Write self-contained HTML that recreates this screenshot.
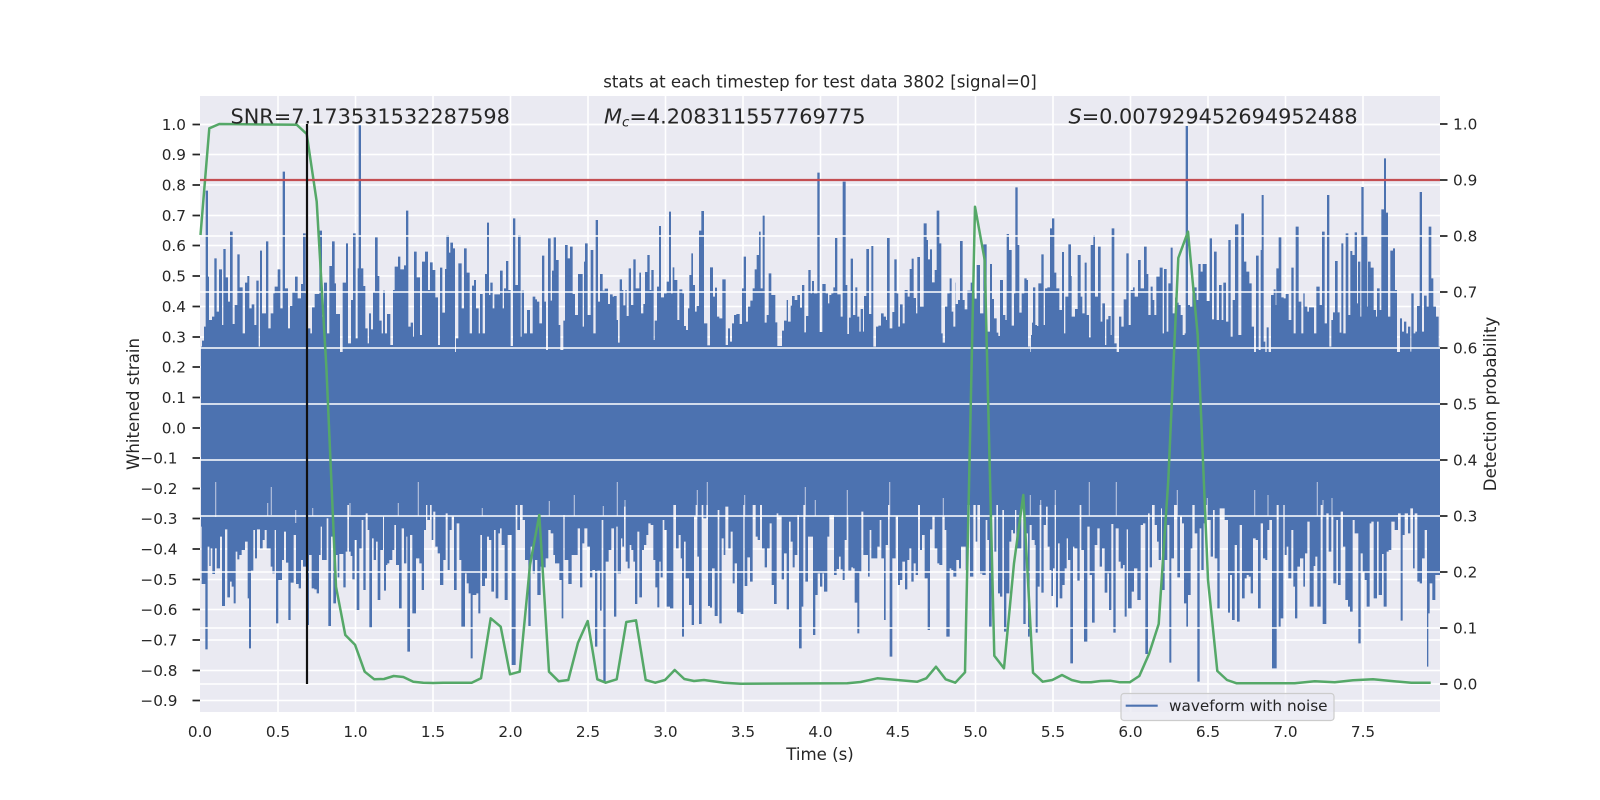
<!DOCTYPE html>
<html>
<head>
<meta charset="utf-8">
<title>stats at each timestep</title>
<style>
html,body{margin:0;padding:0;background:#fff;width:1600px;height:800px;overflow:hidden}
svg{display:block}
text{font-family:"DejaVu Sans","Liberation Sans",sans-serif;fill:#262626}
.t{font-size:15.28px}
.l{font-size:16.6px}
.a{font-size:20.83px}
.g{stroke:#fff;stroke-width:1.6;fill:none}
.k{stroke:#262626;stroke-width:1.8;fill:none}
.b{fill:#4c72b0}
</style>
</head>
<body>
<svg width="1600" height="800" viewBox="0 0 1600 800" xmlns="http://www.w3.org/2000/svg">
<rect width="1600" height="800" fill="#fff"/>
<rect x="200" y="96" width="1240" height="616" fill="#eaeaf2"/>
<path class="g" d="M278 96V712M355.5 96V712M433 96V712M510.500 96V712M588 96V712M665.500 96V712M743 96V712M820.500 96V712M898 96V712M975.500 96V712M1053 96V712M1130.500 96V712M1208 96V712M1285.500 96V712M1363 96V712"/>
<path class="g" d="M200 124.500H1440M200 154.500H1440M200 185H1440M200 215.500H1440M200 245.500H1440M200 276H1440M200 306.500H1440M200 337H1440M200 367H1440M200 397.500H1440M200 428H1440M200 458H1440M200 488.500H1440M200 518.500H1440M200 549H1440M200 579.500H1440M200 609.500H1440M200 640H1440M200 670.500H1440M200 700.500H1440"/>

<rect class="b" x="201" y="352" width="1239" height="153"/>

<g transform="translate(200 200) scale(.33333)">
<path class="b" d="M3 512V440H6V422H12V380H17V-28H24V230H27V360H36V350H43V175H50V335H57V208H66V375H70V147H77V232H84V305H90V95H98V372H104V315H112V163H119V262H128V400H135V248H142V228H148V325H155V313H163V375H169V242H176V440H180V152H186V340H198V124H205V385H212V340H220V280H224V260H233V208H241V325H248V-85H255V265H264V385H270V318H277V275H285V230H293V295H303V252H309V100H317V280H323V385H331V400H336V322H344V282H358V92H366V350H372V248H381V400H388V198H396V124H404V250H408V342H420V480H428V248H438V130H444V430H453V300H459V100H467V415H473V205H476V-225H483V205H490V258H496V385H503V430H507V340H513V388H519V275H525V112H533V228H538V362H545V400H549V272H555V400H561V342H571V435H579V270H584V200H594V170H601V208H612V196H618V32H625V380H632V368H639V410H642V155H650V232H660V405H666V185H675V155H684V270H690V187H698V210H706V292H714V435H720V203H727V338H735V207H739V105H747V158H751V128H759V145H765V460H768V415H775V190H785V325H792V145H800V218H809V400H816V257H822V240H828V325H836V400H840V282H848V400H855V222H861V68H867V285H871V248H878V325H883V283H900V212H908V325H912V265H918V183H925V270H932V438H939V55H946V255H954V105H962V410H965V272H972V400H981V330H990V400H998V290H1006V298H1011V305H1018V370H1026V167H1033V305H1038V450H1044V115H1052V302H1056V212H1061V112H1068V180H1076V375H1081V450H1090V362H1095V135H1103V175H1110V140H1118V282H1125V345H1134V222H1148V380H1152V185H1155V130H1163V345H1172V150H1180V400H1187V60H1194V305H1200V222H1208V272H1214V266H1224V312H1230V283H1238V290H1242V512Z"/>
</g>

<g transform="translate(614 160) scale(.33333)">
<path class="b" d="M0 632V408H8V480H12V548H17V358H24V390H28V436H34V390H38V468H44V325H51V435H58V298H65V385H76V338H81V460H88V432H93V336H100V285H107V390H112V330H119V540H122V482H129V380H135V198H141V412H150V400H158V365H165V155H171V400H176V322H181V360H190V480H196V388H205V400H210V498H216V510H222V445H226V345H232V280H237V375H243V455H248V438H255V212H262V153H270V490H280V556H288V322H297V410H303V383H309V470H316V475H325V358H335V555H342V505H348V545H354V490H360V465H367V462H377V492H384V385H389V290H396V485H402V440H409V422H416V385H422V328H428V285H435V215H440V385H446V167H452V488H458V465H464V340H472V405H484V487H490V558H504V512H510V482H518V420H522V485H530V437H534V408H542V420H550V405H558V443H564V375H571V517H576V468H583V330H590V400H594V363H600V400H610V38H617V516H625V372H635V400H642V430H646V405H652V400H658V382H663V234H670V403H680V470H686V65H695V375H700V522H705V473H710V296H717V465H724V382H730V470H736V515H740V447H747V515H750V408H757V267H765V462H772V258H778V560H786V500H793V497H801V460H809V470H816V480H819V234H827V505H835V456H841V298H848V400H853V500H858V433H866V490H872V390H881V410H887V327H893V296H899V414H906V460H910V291H918V440H929V190H938V240H942V298H948V268H954V367H962V330H968V152H976V250H982V520H986V548H993V440H1000V400H1007V355H1013V455H1018V500H1024V368H1025V432H1032V420H1038V243H1046V420H1052V448H1060V392H1070V368H1076V392H1082V416H1088V315H1098V460H1108V253H1118V515H1128V312H1134V417H1140V475H1148V518H1153V528H1158V360H1167V465H1174V480H1178V222H1185V270H1193V497H1200V400H1204V82H1211V255H1216V458H1223V400H1231V355H1238V360H1242V632Z"/>
</g>

<g transform="translate(1028 200) scale(.33333)">
<path class="b" d="M0 512V440H7V470H9V405H12V368H15V262H22V375H27V378H31V250H40V163H47V375H51V265H58V262H66V85H72V55H79V218H85V265H94V330H102V156H108V400H112V290H121V133H129V228H131V350H141V327H149V165H158V290H163V340H170V188H176V345H183V412H188V135H196V105H201V290H210V140H218V365H223V310H231V435H235V358H241V348H248V405H251V85H259V430H266V475H273V350H280V380H287V298H295V160H302V375H308V270H315V262H320V290H330V180H338V265H348V140H356V222H361V345H368V260H374V300H379V345H385V230H395V203H404V400H408V207H416V395H421V250H428V143H434V340H441V293H446V308H452V315H458V345H464V405H470V400H473V-222H480V315H486V320H493V260H497V262H506V300H511V192H518V215H524V192H536V303H545V115H552V358H558V155H566V360H573V255H581V360H586V248H594V365H601V120H608V410H614V300H621V73H631V405H640V40H648V185H655V215H664V250H671V380H678V505H684V167H692V450H698V150H701V-15H707V425H712V505H716V382H722V475H729V285H737V268H743V315H745V205H752V112H760V292H767V295H773V282H782V360H790V203H797V400H803V80H812V305H820V400H826V280H830V320H838V335H843V322H858V400H865V260H875V315H882V95H890V370H897V-15H904V440H910V360H915V337H921V183H929V337H935V398H940V130H946V400H953V100H961V345H967V153H973V165H980V97H987V310H990V185H997V350H1000V-39H1007V107H1018V320H1020V185H1028V203H1037V330H1044V350H1047V265H1055V330H1060V28H1068V-125H1074V38H1080V350H1087V152H1095V145H1101V270H1107V485H1112V495H1116V355H1122V395H1128V365H1135V400H1140V380H1147V455H1150V280H1157V400H1162V395H1167V318H1175V-24H1182V395H1188V287H1196V320H1202V80H1210V235H1216V320H1224V350H1232V440H1236V512Z"/>
</g>

<g transform="translate(200 480) scale(.33333)">
<path class="b" d="M3 -6V140H5V312H16V508H23V200H28V258H32V205H37V282H45V205H50V265H60V170H66V378H75V148H82V352H90V305H95V320H101V370H107V215H112V238H118V225H125V210H135V185H143V355H147V505H153V272H160V150H165V235H171V148H180V205H188V180H194V150H200V205H212V260H217V280H224V150H228V430H235V300H246V240H252V155H258V248H265V420H272V308H281V165H288V312H296V325H303V240H309V260H322V435H327V225H335V325H343V328H350V340H357V225H362V140H366V240H380V115H385V438H393V170H400V370H408V225H413V292H418V222H430V322H437V215H442V70H447V215H452V228H457V298H464V180H470V390H478V205H485V120H490V330H497V100H503V150H508V445H516V175H521V240H528V185H533V360H541V210H549V110H552V332H558V255H562V250H568V240H577V210H583V135H588V255H597V385H605V145H612V250H619V170H622V515H630V165H637V400H648V235H658V250H665V330H672V150H678V45H682V120H690V50H695V180H700V95H706V200H713V220H720V315H730V240H737V100H743V270H749V150H755V110H762V330H770V130H778V240H784V440H795V280H800V310H806V340H812V535H818V345H829V340H835V400H841V165H846V318H855V295H861V170H867V180H874V335H882V150H887V355H895V160H900V145H905V195H914V360H923V165H935V555H947V50H952V150H960V30H968V120H975V240H985V438H992V200H998V280H1005V240H1012V345H1022V260H1030V262H1037V235H1045V150H1052V160H1060V225H1065V250H1078V300H1085V415H1090V105H1094V240H1105V312H1115V225H1133V145H1140V322H1147V190H1153V145H1162V200H1170V292H1177V270H1185V500H1192V272H1200V392H1205V120H1210V605H1217V245H1226V210H1234V145H1242V-6Z"/>
</g>

<g transform="translate(614 480) scale(.33333)">
<path class="b" d="M0 -6V410H7V140H11V280H21V175H25V200H30V80H35V245H41V265H47V195H52V210H58V245H63V372H70V155H76V352H84V210H90V195H97V165H103V130H110V135H118V240H124V322H130V382H136V245H140V292H146V120H151V150H158V380H168V385H178V70H186V205H194V165H200V235H204V470H210V185H215V295H225V375H233V435H240V110H245V20H250V230H255V432H263V70H268V115H277V0H282V378H288V383H294V265H302V408H311V90H316V430H323V175H329V225H334V80H343V205H350V155H356V310H362V250H369V397H380V402H388V40H392V318H400V232H408V305H416V50H425V170H431V180H438V55H444V205H452V262H459V205H467V130H473V315H480V372H488V100H493V110H503V298H510V220H518V388H525V125H530V185H536V262H542V225H550V105H555V505H563V380H568V20H574V305H582V170H597V465H604V345H611V280H618V320H625V280H630V335H640V170H646V105H660V285H668V267H675V230H680V268H686V300H692V180H698V105H703V272H712V262H717V265H722V368H730V460H736V275H742V95H748V225H762V290H767V150H772V235H790V200H797V120H802V235H810V420H815V195H822V15H827V530H835V235H845V110H852V315H858V300H865V245H873V328H880V240H886V205H892V305H899V250H905V285H912V55H918V210H924V165H932V295H941V450H948V148H955V110H962V205H970V250H976V255H985V110H992V150H997V470H1007V265H1012V270H1018V290H1027V240H1035V265H1041V200H1055V270H1060V60H1068V290H1078V65H1085V185H1090V50H1098V280H1105V285H1115V120H1120V180H1125V440H1133V110H1141V215H1147V50H1152V340H1158V350H1165V90H1170V455H1177V340H1186V185H1192V150H1197V160H1203V90H1207V205H1222V50H1228V432H1235V160H1242V-6Z"/>
</g>

<g transform="translate(1028 480) scale(.33333)">
<path class="b" d="M0 -6V470H5V135H11V180H20V195H23V458H29V320H35V60H40V338H47V135H54V80H59V200H65V270H70V348H75V265H80V30H84V382H90V190H95V355H103V315H110V265H116V175H120V240H127V550H135V200H139V205H148V302H155V40H160V210H168V485H178V140H185V285H192V428H200V195H208V145H215V260H222V205H230V338H238V280H243V390H250V132H256V458H263V145H272V245H278V265H285V255H290V410H296V148H300V385H311V335H318V265H328V360H338V135H345V130H352V522H360V100H365V262H372V50H380V135H387V185H392V240H399V85H402V330H410V240H418V135H424V548H430V235H438V30H448V292H456V110H462V130H468V370H475V440H480V345H488V205H493V60H500V160H508V605H515V145H520V270H527V130H533V55H538V120H548V230H555V90H560V235H568V385H575V85H590V120H600V398H606V285H612V420H620V195H627V425H635V135H642V355H650V295H656V285H662V290H668V340H675V175H683V180H690V385H698V130H705V235H712V240H718V150H724V120H732V565H746V75H752V440H758V415H766V70H770V225H776V200H781V295H790V150H796V320H801V415H808V260H816V235H826V320H831V220H838V125H845V380H857V258H862V230H868V380H878V70H884V432H895V100H902V215H910V110H916V310H925V120H930V315H938V95H945V200H952V360H960V380H966V395H974V120H980V160H991V490H998V220H1004V275H1010V300H1016V380H1025V130H1030V125H1037V355H1047V125H1052V345H1062V222H1067V380H1076V215H1082V210H1090V125H1100V150H1110V100H1118V422H1124V165H1130V100H1140V160H1147V85H1155V265H1160V100H1168V305H1175V310H1182V235H1190V150H1197V560H1201V400H1205V310H1213V360H1222V285H1236V-6Z"/>
</g>

<path d="M215.700 482V517M271.300 487V515M267.700 503V516M295.700 510V523M312.700 508V516M418.300 482V516M350 503V516M398.300 503V516M482.300 508V516M549.300 501V516M574.300 495V516M603.300 506V516M617.300 482V516M625 500V516M707.300 482V516M697.300 490V516M744.700 495V516M805.300 487V516M815.300 500V516M847.300 490V516M889.700 482V516M943.300 498V516M1030.300 495V516M1040.700 500V516M1055.300 490V516M1089.300 482V516M1116.300 482V516M1177.300 490V516M1207.300 498V516M1254.700 490V516M1268 495V516M1317.300 482V516M1323 500V516M1332 498V516" stroke="#eaeaf2" stroke-opacity=".7" stroke-width="1.1" fill="none"/>

<path class="g" d="M200 236H1440M200 292H1440M200 348H1440M200 404H1440M200 460H1440M200 516H1440M200 572H1440M200 628H1440M200 684H1440M200 124.500H1440"/>

<polyline fill="none" stroke="#55a868" stroke-width="2.5" stroke-linejoin="round" points="200.500,235 209.300,128.300 219.300,124 296.700,124.700 306.700,134 316.700,201.700 326.400,368 336,586.700 345.300,635 355,644.700 364.700,671.700 374.300,679.300 384,679 393.700,676 403.300,677 413.300,681.700 423.300,682.700 433.300,683 443.300,682.700 461.700,682.700 471.700,682.700 481,678.300 490.700,618.300 500.700,626.700 510,674.300 519.700,671.700 530,565 539.300,515 549,671.700 558.700,681.300 568.300,680 578,642.700 587.700,621 597.300,679.300 605.700,682.700 616.700,679.300 626.300,622 636,620.300 645.700,680 655.300,682.700 665,680 674.700,670 684.300,679 694,681 704,680 724,682.700 740.700,683.700 847.300,683.300 860.700,682 877.300,678.300 917.300,681.700 926.300,678.300 936,666.700 945.700,679.300 955.300,682.700 965,672.300 975,206.700 984.700,260 994.300,655.700 1004,668.300 1014,563.300 1023.300,495 1033,672.700 1042.700,681.700 1052.300,680 1062,675 1071.700,680 1081.300,682.300 1091,682.300 1100.700,681 1110.300,680.700 1120,682.300 1129.700,682.300 1139.300,676 1149,654 1158.700,624 1168.300,480 1178.300,258 1188,231.700 1197.700,335 1208,580 1217.300,671 1227,680 1236.700,683.300 1294.700,683.300 1314.700,681.300 1334.700,682.300 1353,680.300 1373,679.300 1391.300,681 1411.300,682.700 1430.700,682.700"/>

<path d="M200 180H1440" stroke="#c44e52" stroke-width="2.2" fill="none"/>
<path d="M307 124V684" stroke="#111" stroke-width="2.2" fill="none"/>

<path class="k" d="M192.500 124.500H200M192.500 154.500H200M192.500 185H200M192.500 215.500H200M192.500 245.500H200M192.500 276H200M192.500 306.500H200M192.500 337H200M192.500 367H200M192.500 397.500H200M192.500 428H200M192.500 458H200M192.500 488.500H200M192.500 518.500H200M192.500 549H200M192.500 579.500H200M192.500 609.500H200M192.500 640H200M192.500 670.500H200M192.500 700.500H200"/>
<path class="k" d="M1440 124H1447.500M1440 180H1447.500M1440 236H1447.500M1440 292H1447.500M1440 348H1447.500M1440 404H1447.500M1440 460H1447.500M1440 516H1447.500M1440 572H1447.500M1440 628H1447.500M1440 684H1447.500"/>

<g text-anchor="end">
<text class="t" x="186" y="130">1.0</text>
<text class="t" x="186" y="160">0.9</text>
<text class="t" x="186" y="190.500">0.8</text>
<text class="t" x="186" y="221">0.7</text>
<text class="t" x="186" y="251">0.6</text>
<text class="t" x="186" y="281.500">0.5</text>
<text class="t" x="186" y="312">0.4</text>
<text class="t" x="186" y="342.500">0.3</text>
<text class="t" x="186" y="372.500">0.2</text>
<text class="t" x="186" y="403">0.1</text>
<text class="t" x="186" y="433.500">0.0</text>
<text class="t" x="177.500" y="463.500">−0.1</text>
<text class="t" x="177.500" y="494">−0.2</text>
<text class="t" x="177.500" y="524">−0.3</text>
<text class="t" x="177.500" y="554.500">−0.4</text>
<text class="t" x="177.500" y="585">−0.5</text>
<text class="t" x="177.500" y="615">−0.6</text>
<text class="t" x="177.500" y="645.500">−0.7</text>
<text class="t" x="177.500" y="676">−0.8</text>
<text class="t" x="177.500" y="706">−0.9</text>
</g>

<g>
<text class="t" x="1453" y="129.500">1.0</text>
<text class="t" x="1453" y="185.500">0.9</text>
<text class="t" x="1453" y="241.500">0.8</text>
<text class="t" x="1453" y="297.500">0.7</text>
<text class="t" x="1453" y="353.500">0.6</text>
<text class="t" x="1453" y="409.500">0.5</text>
<text class="t" x="1453" y="465.500">0.4</text>
<text class="t" x="1453" y="521.500">0.3</text>
<text class="t" x="1453" y="577.500">0.2</text>
<text class="t" x="1453" y="633.500">0.1</text>
<text class="t" x="1453" y="689.500">0.0</text>
</g>

<g text-anchor="middle">
<text class="t" x="200" y="737">0.0</text>
<text class="t" x="278" y="737">0.5</text>
<text class="t" x="355.500" y="737">1.0</text>
<text class="t" x="433" y="737">1.5</text>
<text class="t" x="510.500" y="737">2.0</text>
<text class="t" x="588" y="737">2.5</text>
<text class="t" x="665.500" y="737">3.0</text>
<text class="t" x="743" y="737">3.5</text>
<text class="t" x="820.500" y="737">4.0</text>
<text class="t" x="898" y="737">4.5</text>
<text class="t" x="975.500" y="737">5.0</text>
<text class="t" x="1053" y="737">5.5</text>
<text class="t" x="1130.500" y="737">6.0</text>
<text class="t" x="1208" y="737">6.5</text>
<text class="t" x="1285.500" y="737">7.0</text>
<text class="t" x="1363" y="737">7.5</text>
<text class="l" x="820" y="760">Time (s)</text>
<text class="l" x="820" y="87.500">stats at each timestep for test data 3802 [signal=0]</text>
<text class="l" transform="translate(139 404) rotate(-90)">Whitened strain</text>
<text class="l" transform="translate(1496 404) rotate(-90)">Detection probability</text>
</g>

<text class="a" x="230.500" y="123.500">SNR=7.173531532287598</text>
<text class="a" x="604" y="123.500"><tspan font-style="italic">M</tspan><tspan font-style="italic" font-size="13.5" dy="3">c</tspan><tspan dy="-3">=4.208311557769775</tspan></text>
<text class="a" x="1068.500" y="123.500"><tspan font-style="italic">S</tspan>=0.007929452694952488</text>

<rect x="1121" y="693.500" width="213" height="27" rx="3" ry="3" fill="#eaeaf2" fill-opacity=".8" stroke="#ccc" stroke-width="1.2"/>
<path d="M1125.700 705.700H1157.700" stroke="#4c72b0" stroke-width="2.1" fill="none"/>
<text class="t" x="1169" y="711">waveform with noise</text>
</svg>
</body>
</html>
